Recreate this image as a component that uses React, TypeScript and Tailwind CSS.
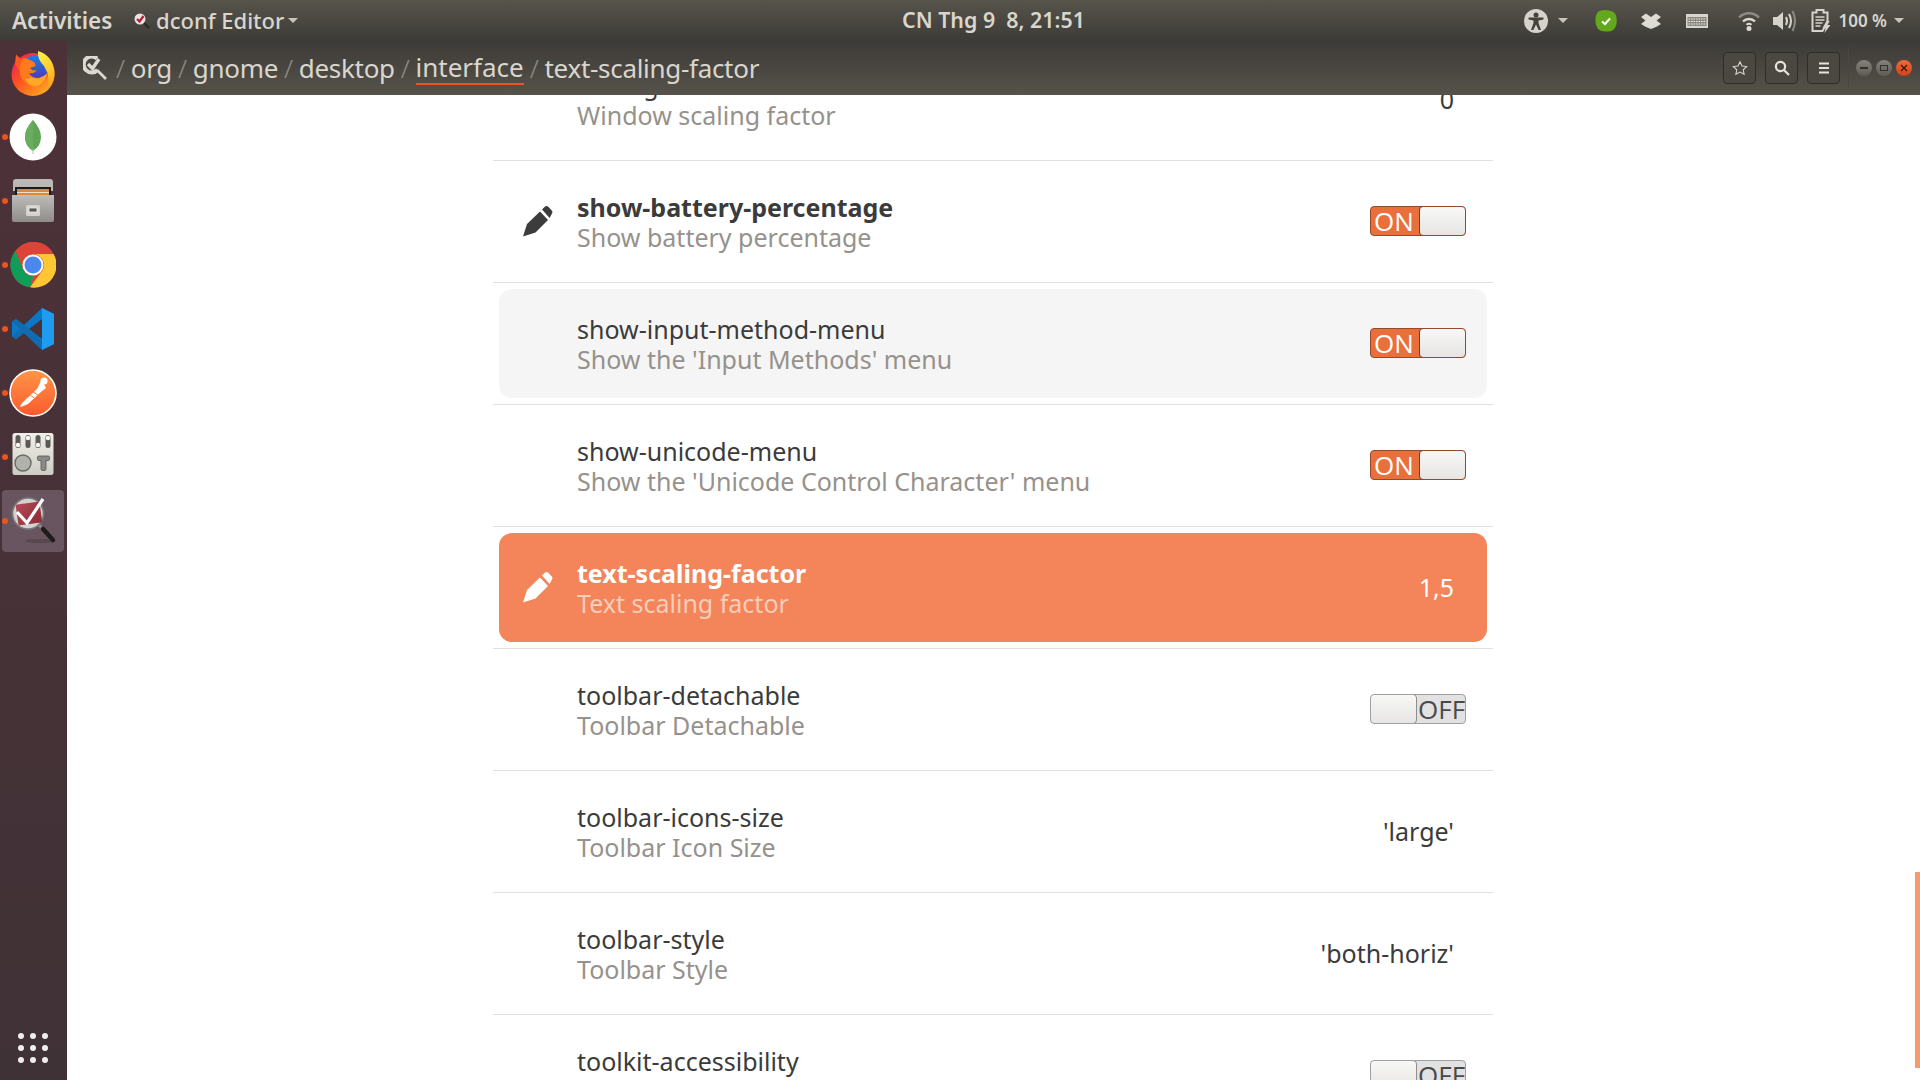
import React from "react";

const UI = { fontFamily: '"Noto Sans", sans-serif' };
const ALT = { fontFamily: '"Open Sans", sans-serif' };

function Pencil({ light }: { light?: boolean }) {
  return (
    <svg width="32" height="32" viewBox="0 0 32 32" fill={light ? "#ffffff" : "#3c3c3c"}>
      <path d="M1 31.5 L5 19 L18 6.5 L26 15 L13.5 27.5 Z" />
      <path d="M20 4.6 L23 1.6 Q24.5 0.4 26 1.6 L30 5.8 Q31 7.2 30 8.6 L27.6 13 Z" />
    </svg>
  );
}

function Toggle({ on }: { on: boolean }) {
  if (on) {
    return (
      <div className="flex h-[30px] w-[96px] rounded-[4px] bg-[#e9703b] border border-[#94492c] overflow-hidden">
        <span className="w-[48px] pl-[3px] text-[26px] leading-[28px] text-white" style={ALT}>ON</span>
        <div className="flex-1 rounded-[4px] border border-[#7e3a22] bg-gradient-to-b from-[#f8f8f7] to-[#e6e5e3] -my-px -mr-px" />
      </div>
    );
  }
  return (
    <div className="flex h-[30px] w-[96px] rounded-[4px] bg-[#e2e2e2] border border-[#a0a0a0] overflow-hidden">
      <div className="w-[47px] shrink-0 rounded-[4px] border border-[#8e8e8e] bg-gradient-to-b from-[#f8f8f7] to-[#e6e5e3] -my-px -ml-px" />
      <span className="pl-[1px] text-[26px] leading-[28px] text-[#4a4a4a] whitespace-nowrap" style={ALT}>OFF</span>
    </div>
  );
}

type RowProps = {
  name: string;
  sub: string;
  value?: string;
  toggle?: boolean;
  edited?: boolean;
  hover?: boolean;
  selected?: boolean;
};

function Row({ name, sub, value, toggle, edited, hover, selected }: RowProps) {
  const bg = selected ? "bg-[#f4845a]" : hover ? "bg-[#f5f5f5]" : "";
  return (
    <div className="h-[122px] border-b border-[#e0e0e0] p-[6px]">
      <div className={`flex h-[109px] items-center rounded-[13px] ${bg}`}>
        <div className="flex w-[78px] shrink-0 items-center pb-[1px] pl-[23px]">
          {edited && <Pencil light={selected} />}
        </div>
        <div className="flex-1" style={UI}>
          <div className={`text-[25px] leading-[30px] ${edited ? "font-bold" : ""} ${selected ? "text-white" : "text-[#3b3b3b]"}`}>{name}</div>
          <div className={`text-[25px] leading-[30px] ${selected ? "text-[#f8cdb9]" : "text-[#96918c]"}`}>{sub}</div>
        </div>
        {value !== undefined && (
          <div className={`mr-[33px] text-[25px] ${selected ? "text-white" : "text-[#3b3b3b]"}`} style={UI}>{value}</div>
        )}
        {toggle !== undefined && (
          <div className="mr-[21px] mb-[2px]"><Toggle on={toggle} /></div>
        )}
      </div>
    </div>
  );
}

function Firefox() {
  return (
    <svg width="46" height="46" viewBox="0 0 46 46">
      <defs>
        <linearGradient id="ffa" x1="0.1" y1="0.2" x2="0.8" y2="1">
          <stop offset="0" stopColor="#f02a4a" />
          <stop offset="0.45" stopColor="#ff5a1f" />
          <stop offset="1" stopColor="#ffb01f" />
        </linearGradient>
        <linearGradient id="ffb" x1="0.5" y1="0" x2="0.5" y2="1">
          <stop offset="0" stopColor="#1b7fe8" />
          <stop offset="1" stopColor="#5a2cb0" />
        </linearGradient>
        <linearGradient id="ffc" x1="0.3" y1="0" x2="0.7" y2="1">
          <stop offset="0" stopColor="#fff04d" />
          <stop offset="0.6" stopColor="#ffc52a" />
          <stop offset="1" stopColor="#ff9a1c" />
        </linearGradient>
      </defs>
      <circle cx="23" cy="24.5" r="21.5" fill="url(#ffa)" />
      <path d="M5 14 L6 4.5 L11 9 L15 8 L19 14 L10 22 Z" fill="#ff5a22" />
      <circle cx="25" cy="19.5" r="14" fill="url(#ffb)" />
      <path d="M28 1 Q42 5 44.5 21 Q45.5 32 37 39 Q41 27 34 16 Q27 9 28 1 Z" fill="url(#ffc)" />
      <path d="M13 8 Q17 8 20 10 Q26 12 25.5 16 L20 18 Q22 21 27 20.5 Q24 24 19 23 Q21 28 29 28 Q34 27 38 22 Q37 33 26 36 Q14 36 10 25 Q9 15 13 8 Z" fill="#ff7a1c" />
      <path d="M21 27 Q27 31 37 24 Q34 35 25 36.5 Q17 35 15 28 Q18 30 21 27 Z" fill="#ffa726" />
    </svg>
  );
}

function Chrome() {
  return (
    <svg width="46" height="46" viewBox="0 0 46 46">
      <circle cx="23" cy="23" r="22.5" fill="#dc4437" />
      <path d="M23 12 H43.6 A22.5 22.5 0 0 1 20 45.3 L32.5 28.5 A11 11 0 0 0 23 12 Z" fill="#fdc833" />
      <path d="M20 45.3 A22.5 22.5 0 0 1 5.6 8.8 L13.5 28.5 A11 11 0 0 0 23.5 34 Z" fill="#109d58" />
      <path d="M5.6 8.8 L14 25 A11 11 0 0 1 23 12 H43.6 A22.5 22.5 0 0 0 5.6 8.8 Z" fill="#dc4437" />
      <circle cx="23" cy="23" r="10.5" fill="#ffffff" />
      <circle cx="23" cy="23" r="8.5" fill="#4a87ee" />
    </svg>
  );
}

function VSCode() {
  return (
    <svg width="44" height="44" viewBox="0 0 44 44">
      <path d="M31 1 L43 7 V37 L31 43 L13 26 L5 32 L1 29 V15 L5 12 L13 18 Z M31 12 L18 22 L31 32 Z" fill="#0a78c6" fillRule="evenodd" />
      <path d="M1 14.5 L5 12 L31 32 V43 L13 26 L5 32 L1 29.5 L9 22 Z" fill="#0f6cb0" />
      <path d="M31 1 L43 7 V37 L31 43 Z" fill="#1f9cf0" />
    </svg>
  );
}

function Postman() {
  return (
    <svg width="48" height="48" viewBox="0 0 48 48">
      <defs>
        <linearGradient id="pm" x1="0" y1="0" x2="0" y2="1">
          <stop offset="0" stopColor="#ff9548" />
          <stop offset="1" stopColor="#fb5a2c" />
        </linearGradient>
      </defs>
      <circle cx="24" cy="24" r="23" fill="url(#pm)" stroke="#ffffff" strokeWidth="1.6" />
      <path d="M11 37 L14 33 L28 20 L32 12 L34 13 L37 19 L33 22 L19 35 L12 38 Z" fill="#ffffff" />
      <circle cx="35" cy="12" r="3.6" fill="#ffffff" />
      <path d="M20 25 L30 33 M23 22 L33 29" stroke="#ff7a3a" strokeWidth="1" />
    </svg>
  );
}

function Mongo() {
  return (
    <svg width="48" height="48" viewBox="0 0 48 48">
      <circle cx="24" cy="24" r="23.5" fill="#ffffff" />
      <path d="M24 7 Q32 16 32 24 Q32 33 24 38 Q16 33 16 24 Q16 16 24 7 Z" fill="#5fa654" />
      <path d="M24 7 Q16 16 16 24 Q16 33 24 38 Z" fill="#6bad5f" />
      <path d="M24 36 V41" stroke="#b7c9a8" strokeWidth="1" />
    </svg>
  );
}

function Files() {
  return (
    <svg width="42" height="44" viewBox="0 0 42 44">
      <defs>
        <linearGradient id="fc" x1="0" y1="0" x2="0" y2="1">
          <stop offset="0" stopColor="#bdbcb8" />
          <stop offset="1" stopColor="#8f8d89" />
        </linearGradient>
      </defs>
      <path d="M1 3 Q1 0 4 0 H38 Q41 0 41 3 V12 H1 Z" fill="#b9b8b5" />
      <rect x="3" y="8" width="36" height="10" fill="#1c1a18" />
      <rect x="5" y="10" width="32" height="8" fill="#e2873a" />
      <rect x="5" y="13" width="32" height="1" fill="#f6ddc0" />
      <path d="M0 16 H42 V41 Q42 43 40 43 H2 Q0 43 0 41 Z" fill="url(#fc)" />
      <rect x="14" y="26" width="14" height="11" rx="1.5" fill="#d4d3cf" />
      <rect x="17" y="29" width="8" height="4" fill="#5a5855" stroke="#f0f0ee" strokeWidth="0.8" />
    </svg>
  );
}

function Tweaks() {
  const xs = [6, 16, 26, 36];
  const ys = [12, 5, 12, 5];
  return (
    <svg width="42" height="44" viewBox="0 0 42 44" className="mb-[5px]">
      <defs>
        <linearGradient id="tw" x1="0" y1="0" x2="0" y2="1">
          <stop offset="0" stopColor="#f0f0ea" />
          <stop offset="1" stopColor="#cdcdc5" />
        </linearGradient>
      </defs>
      <rect x="0.5" y="0" width="41" height="42" rx="2.5" fill="url(#tw)" />
      {xs.map((x, i) => (
        <g key={x}>
          <rect x={x - 2.5} y="2" width="5" height="13" rx="2.5" fill="#5b5956" />
          <circle cx={x} cy={ys[i]} r="2.2" fill="#f8f8f4" />
        </g>
      ))}
      <circle cx="11" cy="30" r="8" fill="#b2b2ac" stroke="#6a6a66" strokeWidth="1.4" />
      <path d="M25.5 24 Q25.5 23 27 23 H36 Q37.5 23 37.5 24 V26.5 Q37.5 27.5 36 27.5 H34 V36 Q34 37.5 32 37.5 H31 Q29 37.5 29 36 V27.5 H27 Q25.5 27.5 25.5 26.5 Z" fill="#8b8b86" stroke="#555" strokeWidth="0.8" />
    </svg>
  );
}

function DconfBig() {
  return (
    <svg width="50" height="50" viewBox="0 0 50 50">
      <defs>
        <linearGradient id="dr" x1="0" y1="0" x2="1" y2="1">
          <stop offset="0" stopColor="#b24a55" />
          <stop offset="1" stopColor="#8e2c38" />
        </linearGradient>
      </defs>
      <ellipse cx="32" cy="45" rx="15" ry="2" fill="#5a464e" />
      <line x1="30" y1="28" x2="36" y2="34" stroke="#8a8a8a" strokeWidth="3" />
      <line x1="35" y1="33" x2="45" y2="44" stroke="#1f1d1c" strokeWidth="4.5" strokeLinecap="round" />
      <circle cx="20" cy="17.5" r="15.5" fill="#d6d1d1" stroke="#7c7878" strokeWidth="1.6" />
      <rect x="9" y="7" width="24" height="21" rx="1.5" fill="url(#dr)" transform="rotate(-8 21 18)" />
      <path d="M9 16 L19 27 L35 3" stroke="#ffffff" strokeWidth="3.2" fill="none" />
    </svg>
  );
}

function DockItem({ children, dot, active }: { children: React.ReactNode; dot?: boolean; active?: boolean }) {
  return (
    <div className="flex h-[64px] items-center justify-center pr-[1px]">
      {dot && <div className="relative z-10 ml-[2px] mr-[-8px] h-[6px] w-[6px] shrink-0 rounded-full bg-[#e95420]" />}
      <div className={`flex flex-1 items-center justify-center ${active ? "ml-[2px] mr-[2px] h-[62px] rounded-[4px] bg-[#695560]" : ""}`}>
        {children}
      </div>
    </div>
  );
}

function Sidebar() {
  return (
    <aside className="flex h-full w-[67px] shrink-0 flex-col bg-gradient-to-b from-[#4d3138] to-[#3f3236]">
      <DockItem><Firefox /></DockItem>
      <DockItem dot><Mongo /></DockItem>
      <DockItem dot><Files /></DockItem>
      <DockItem dot><Chrome /></DockItem>
      <DockItem dot><VSCode /></DockItem>
      <DockItem dot><Postman /></DockItem>
      <DockItem dot><Tweaks /></DockItem>
      <DockItem dot active><DconfBig /></DockItem>
      <div className="mt-auto mb-[17px] ml-[18px] grid w-[30px] grid-cols-3 gap-x-[6px] gap-y-[6px]">
        {Array.from({ length: 9 }).map((_, i) => (
          <div key={i} className="h-[6px] w-[6px] rounded-full bg-[#efeeec]" />
        ))}
      </div>
    </aside>
  );
}

function Caret() {
  return <span className="inline-block h-0 w-0 border-x-[5px] border-t-[5px] border-x-transparent border-t-[#c9c6bf]" />;
}

function TopBar() {
  return (
    <div className="flex h-[41px] shrink-0 items-center bg-gradient-to-b from-[#57544c] to-[#3d3b37] font-medium text-[#d9d6ce]" style={UI}>
      <div className="flex w-[902px] shrink-0 items-center pl-[12px] text-[22px]">
        <span className="w-[122px] text-[22.5px] font-semibold">Activities</span>
        <svg width="16" height="16" viewBox="0 0 16 16" className="mr-[6px]">
          <line x1="9" y1="9" x2="15" y2="15" stroke="#2a2826" strokeWidth="2" />
          <circle cx="6" cy="6" r="5.5" fill="#e8e4e2" />
          <path d="M3 6 L5.5 8.5 L9.5 3" stroke="#b5202e" strokeWidth="2.2" fill="none" />
        </svg>
        <span className="font-medium">dconf Editor</span>
        <span className="ml-[4px] flex"><Caret /></span>
      </div>
      <span className="whitespace-pre text-[21.4px] font-semibold">CN Thg 9  8, 21:51</span>
      <div className="ml-auto flex items-center pr-[16px]">
        <svg width="24" height="24" viewBox="0 0 24 24">
          <circle cx="12" cy="12" r="12" fill="#d6d3cd" />
          <circle cx="12" cy="6" r="2.5" fill="#45423d" />
          <path d="M4.5 8.5 H19.5 V10.5 L14.5 11.5 V14 L17 21 H14.6 L12 15.5 L9.4 21 H7 L9.5 14 V11.5 L4.5 10.5 Z" fill="#45423d" />
        </svg>
        <span className="ml-[10px] mr-[27px] flex"><Caret /></span>
        <svg width="22" height="22" viewBox="0 0 22 22" className="mr-[24px]">
          <path d="M6 0.5 Q10 -0.5 14 0.5 Q21 1 21.5 8 Q22.5 14 20 18 Q17 22 12 21.5 Q6 22 3 19 Q0 15 0.5 9 Q0.5 2 6 0.5 Z" fill="#63a71c" />
          <path d="M7 11.5 L10 14 L15 8.5" stroke="#ffffff" strokeWidth="2.2" fill="none" />
        </svg>
        <svg width="20" height="16" viewBox="0 0 20 16" fill="#dedbd4" className="mr-[25px]">
          <path d="M0 4 L5 0.5 L10 4 L15 0.5 L20 4 L15.6 7.5 L20 11 L15 14 L10 16 L5 14 L0 11 L4.4 7.5 Z" />
        </svg>
        <svg width="22" height="14" viewBox="0 0 22 14" className="mr-[30px]">
          <rect width="22" height="14" fill="#d8d5ce" />
          <rect x="1.5" y="3" width="19" height="9" fill="#8a8780" />
          <path d="M2.5 5 H19.5 M2.5 7.5 H19.5 M2.5 10 H19.5" stroke="#ecebe6" strokeWidth="1.2" strokeDasharray="1.6 0.9" />
        </svg>
        <svg width="22" height="20" viewBox="0 0 22 20" className="mr-[13px]">
          <path d="M1 6.5 A14 14 0 0 1 21 6.5" stroke="#8d8a83" strokeWidth="2.4" fill="none" />
          <path d="M5 10.5 A8.5 8.5 0 0 1 17 10.5" stroke="#dedbd4" strokeWidth="2.4" fill="none" />
          <path d="M8.5 13.8 A4 4 0 0 1 13.5 13.8" stroke="#dedbd4" strokeWidth="2" fill="none" />
          <circle cx="11" cy="17.5" r="2.5" fill="#dedbd4" />
        </svg>
        <svg width="23" height="22" viewBox="0 0 23 22" className="mr-[15px]">
          <path d="M0 7 H4 L10 2 V20 L4 15 H0 Z" fill="#d6d3cc" />
          <path d="M13 7 Q15 11 13 15" stroke="#d6d3cc" strokeWidth="2" fill="none" />
          <path d="M16 4 Q20 11 16 18" stroke="#d6d3cc" strokeWidth="2" fill="none" />
          <path d="M19.5 1 Q24.5 11 19.5 21" stroke="#8d8a83" strokeWidth="2" fill="none" />
        </svg>
        <svg width="21" height="24" viewBox="0 0 20 24" className="mr-[7px]">
          <path d="M1 3.5 H5 V1 H12 V3.5 H16 V13 L11 22 H1 Z" fill="none" stroke="#d6d3cc" strokeWidth="2" />
          <path d="M4 8 H13 M4 11 H13 M4 14 H11 M4 17 H9" stroke="#d6d3cc" strokeWidth="1.6" />
          <path d="M15 12 L11 19 H14 L13 24 L19 16 H16 L18 12 Z" fill="#d6d3cc" />
        </svg>
        <span className="whitespace-nowrap text-[17px] font-semibold">100 %</span>
        <span className="ml-[7px] flex"><Caret /></span>
      </div>
    </div>
  );
}

function HBtn({ children }: { children: React.ReactNode }) {
  return (
    <div className="flex h-[32px] w-[33px] items-center justify-center rounded-[4px] border border-[#2f2d2a] bg-[#4b4842]">
      {children}
    </div>
  );
}

function Sep() {
  return <span className="mx-[6px] font-light text-[#8f8b84]">/</span>;
}

function HeaderBar() {
  return (
    <div className="flex h-[54px] shrink-0 items-center bg-gradient-to-b from-[#3d3b37] to-[#56524b] text-[#d9d6ce]">
      <svg width="24" height="24" viewBox="0 0 24 24" className="ml-[16px]">
        <path d="M14 2.5 A8 8 0 1 0 14.5 14" stroke="#dcd9d2" strokeWidth="4" fill="none" />
        <path d="M5 8 L9.5 12.5 L16 3" stroke="#dcd9d2" strokeWidth="3.4" fill="none" />
        <path d="M14 14 L23 23" stroke="#dcd9d2" strokeWidth="2.6" />
      </svg>
      <div className="ml-[3px] flex items-center whitespace-nowrap text-[26px] tracking-[-0.3px]" style={UI}>
        <Sep />
        <span>org</span>
        <Sep />
        <span>gnome</span>
        <Sep />
        <span>desktop</span>
        <Sep />
        <span className="border-b-2 border-[#e95420] leading-[31px] tracking-[0px]">interface</span>
        <Sep />
        <span>text-scaling-factor</span>
      </div>
      <div className="ml-auto flex items-center">
        <HBtn>
          <svg width="16" height="16" viewBox="0 0 24 24" fill="none" stroke="#d9d6ce" strokeWidth="1.6">
            <path d="M12 2.5 L15 9 L22 9.8 L16.8 14.6 L18.2 21.5 L12 18 L5.8 21.5 L7.2 14.6 L2 9.8 L9 9 Z" />
          </svg>
        </HBtn>
        <div className="ml-[9px]">
          <HBtn>
            <svg width="16" height="16" viewBox="0 0 16 16" fill="none" stroke="#e6e3dc" strokeWidth="2.2">
              <circle cx="6.5" cy="6.5" r="4.6" />
              <path d="M10 10 L15 15" />
            </svg>
          </HBtn>
        </div>
        <div className="ml-[9px]">
          <HBtn>
            <svg width="12" height="12" viewBox="0 0 12 12" stroke="#e6e3dc" strokeWidth="1.8">
              <path d="M1 1.5 H11 M1 6 H11 M1 10.5 H11" />
            </svg>
          </HBtn>
        </div>
        <div className="ml-[8px] h-[42px] w-px bg-[#4a4741]" />
        <div className="ml-[7px] flex items-center gap-[4px] pr-[8px]">
          <div className="flex h-[16px] w-[16px] items-center justify-center rounded-full bg-gradient-to-b from-[#85827b] to-[#5e5b55]">
            <div className="h-[1.5px] w-[8px] bg-[#33312e]" />
          </div>
          <div className="flex h-[16px] w-[16px] items-center justify-center rounded-full bg-gradient-to-b from-[#85827b] to-[#5e5b55]">
            <div className="h-[6px] w-[8px] border border-[#33312e]" />
          </div>
          <div className="flex h-[16px] w-[16px] items-center justify-center rounded-full bg-gradient-to-b from-[#f06a3a] to-[#cf4316] text-[#3a1a0c]">
            <svg width="8" height="8" viewBox="0 0 8 8" stroke="#3a1a0c" strokeWidth="1.3"><path d="M1 1 L7 7 M7 1 L1 7" /></svg>
          </div>
        </div>
      </div>
    </div>
  );
}

export default function App() {
  return (
    <div className="flex h-screen w-screen flex-col overflow-hidden bg-white">
      <TopBar />
      <div className="flex min-h-0 flex-1">
        <Sidebar />
        <div className="flex min-w-0 flex-1 flex-col">
          <HeaderBar />
          <div className="relative min-h-0 flex-1 overflow-hidden pr-[1px]">
            <div className="mx-auto mt-[-56px] w-[1000px]">
              <Row name="scaling-factor" sub="Window scaling factor" value="0" />
              <Row name="show-battery-percentage" sub="Show battery percentage" toggle={true} edited />
              <Row name="show-input-method-menu" sub="Show the 'Input Methods' menu" toggle={true} hover />
              <Row name="show-unicode-menu" sub="Show the 'Unicode Control Character' menu" toggle={true} />
              <Row name="text-scaling-factor" sub="Text scaling factor" value="1,5" edited selected />
              <Row name="toolbar-detachable" sub="Toolbar Detachable" toggle={false} />
              <Row name="toolbar-icons-size" sub="Toolbar Icon Size" value="'large'" />
              <Row name="toolbar-style" sub="Toolbar Style" value="'both-horiz'" />
              <Row name="toolkit-accessibility" sub="Toolkit Accessibility" toggle={false} />
            </div>
            <div className="absolute right-0 top-[777px] h-[196px] w-[5px] bg-[#f79a6e]" />
          </div>
        </div>
      </div>
    </div>
  );
}
